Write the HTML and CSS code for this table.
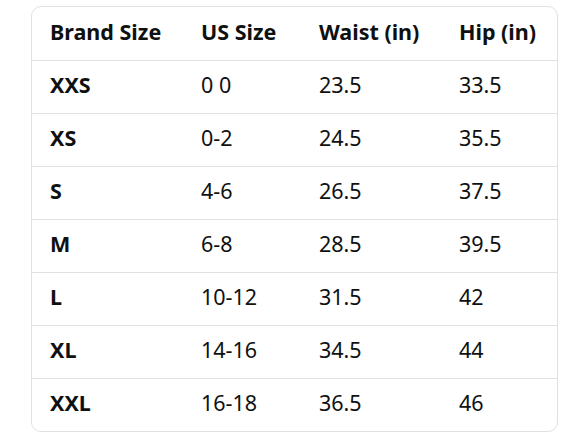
FILE: index.html
```html
<!DOCTYPE html>
<html lang="en">
<head>
    <meta charset="UTF-8">
    <meta name="viewport" content="width=device-width, initial-scale=1.0">
    <title>Size Chart</title>
    <link rel="stylesheet" href="styles.css">
</head>
<body>
    <div class="chart">
        <table class="size-table">
            <thead>
                <tr>
                    <th class="col-brand">Brand Size</th>
                    <th class="col-us">US Size</th>
                    <th class="col-waist">Waist (in)</th>
                    <th class="col-hip">Hip (in)</th>
                </tr>
            </thead>
            <tbody>
                <tr><td class="size">XXS</td><td>0 0</td><td>23.5</td><td>33.5</td></tr>
                <tr><td class="size">XS</td><td>0-2</td><td>24.5</td><td>35.5</td></tr>
                <tr><td class="size">S</td><td>4-6</td><td>26.5</td><td>37.5</td></tr>
                <tr><td class="size">M</td><td>6-8</td><td>28.5</td><td>39.5</td></tr>
                <tr><td class="size">L</td><td>10-12</td><td>31.5</td><td>42</td></tr>
                <tr><td class="size">XL</td><td>14-16</td><td>34.5</td><td>44</td></tr>
                <tr><td class="size">XXL</td><td>16-18</td><td>36.5</td><td>46</td></tr>
            </tbody>
        </table>
    </div>
</body>
</html>
```

FILE: styles.css
```css
* { margin: 0; padding: 0; box-sizing: border-box; }
body { background: #fff; padding: 6px 0 0 31px; font-family: "Noto Sans", Arial, sans-serif; color: #0f1111; }
.chart { width: 527px; border: 1px solid #dfe2e2; border-radius: 10px; overflow: hidden; }
.size-table { width: 100%; border-collapse: collapse; table-layout: fixed; }
.size-table th, .size-table td { text-align: left; padding: 0 0 3px 18px; font-size: 21.5px; line-height: 1.2; }
.size-table th { height: 53px; font-weight: 700; border-bottom: 1px solid #dfe2e2; }
.size-table td { height: 53px; font-weight: 400; border-bottom: 1px solid #dfe2e2; }
.size-table tbody tr:last-child td { border-bottom: none; }
.size-table td.size { font-weight: 700; }
.col-brand { width: 151px; }
.col-us { width: 118px; }
.col-waist { width: 140px; }
.col-hip { width: 116px; }
```
